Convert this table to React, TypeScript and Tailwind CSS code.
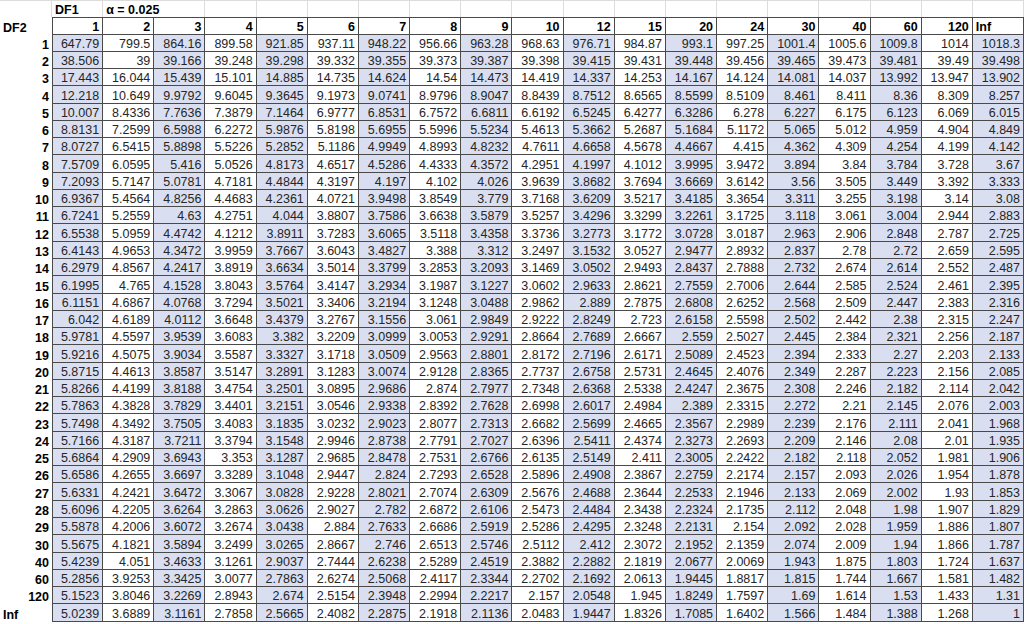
import React from "react";

const COLS = ["1", "2", "3", "4", "5", "6", "7", "8", "9", "10", "12", "15", "20", "24", "30", "40", "60", "120", "Inf"];

const ROWS: [string, string][] = [
  ["1", "647.79 799.5 864.16 899.58 921.85 937.11 948.22 956.66 963.28 968.63 976.71 984.87 993.1 997.25 1001.4 1005.6 1009.8 1014 1018.3"],
  ["2", "38.506 39 39.166 39.248 39.298 39.332 39.355 39.373 39.387 39.398 39.415 39.431 39.448 39.456 39.465 39.473 39.481 39.49 39.498"],
  ["3", "17.443 16.044 15.439 15.101 14.885 14.735 14.624 14.54 14.473 14.419 14.337 14.253 14.167 14.124 14.081 14.037 13.992 13.947 13.902"],
  ["4", "12.218 10.649 9.9792 9.6045 9.3645 9.1973 9.0741 8.9796 8.9047 8.8439 8.7512 8.6565 8.5599 8.5109 8.461 8.411 8.36 8.309 8.257"],
  ["5", "10.007 8.4336 7.7636 7.3879 7.1464 6.9777 6.8531 6.7572 6.6811 6.6192 6.5245 6.4277 6.3286 6.278 6.227 6.175 6.123 6.069 6.015"],
  ["6", "8.8131 7.2599 6.5988 6.2272 5.9876 5.8198 5.6955 5.5996 5.5234 5.4613 5.3662 5.2687 5.1684 5.1172 5.065 5.012 4.959 4.904 4.849"],
  ["7", "8.0727 6.5415 5.8898 5.5226 5.2852 5.1186 4.9949 4.8993 4.8232 4.7611 4.6658 4.5678 4.4667 4.415 4.362 4.309 4.254 4.199 4.142"],
  ["8", "7.5709 6.0595 5.416 5.0526 4.8173 4.6517 4.5286 4.4333 4.3572 4.2951 4.1997 4.1012 3.9995 3.9472 3.894 3.84 3.784 3.728 3.67"],
  ["9", "7.2093 5.7147 5.0781 4.7181 4.4844 4.3197 4.197 4.102 4.026 3.9639 3.8682 3.7694 3.6669 3.6142 3.56 3.505 3.449 3.392 3.333"],
  ["10", "6.9367 5.4564 4.8256 4.4683 4.2361 4.0721 3.9498 3.8549 3.779 3.7168 3.6209 3.5217 3.4185 3.3654 3.311 3.255 3.198 3.14 3.08"],
  ["11", "6.7241 5.2559 4.63 4.2751 4.044 3.8807 3.7586 3.6638 3.5879 3.5257 3.4296 3.3299 3.2261 3.1725 3.118 3.061 3.004 2.944 2.883"],
  ["12", "6.5538 5.0959 4.4742 4.1212 3.8911 3.7283 3.6065 3.5118 3.4358 3.3736 3.2773 3.1772 3.0728 3.0187 2.963 2.906 2.848 2.787 2.725"],
  ["13", "6.4143 4.9653 4.3472 3.9959 3.7667 3.6043 3.4827 3.388 3.312 3.2497 3.1532 3.0527 2.9477 2.8932 2.837 2.78 2.72 2.659 2.595"],
  ["14", "6.2979 4.8567 4.2417 3.8919 3.6634 3.5014 3.3799 3.2853 3.2093 3.1469 3.0502 2.9493 2.8437 2.7888 2.732 2.674 2.614 2.552 2.487"],
  ["15", "6.1995 4.765 4.1528 3.8043 3.5764 3.4147 3.2934 3.1987 3.1227 3.0602 2.9633 2.8621 2.7559 2.7006 2.644 2.585 2.524 2.461 2.395"],
  ["16", "6.1151 4.6867 4.0768 3.7294 3.5021 3.3406 3.2194 3.1248 3.0488 2.9862 2.889 2.7875 2.6808 2.6252 2.568 2.509 2.447 2.383 2.316"],
  ["17", "6.042 4.6189 4.0112 3.6648 3.4379 3.2767 3.1556 3.061 2.9849 2.9222 2.8249 2.723 2.6158 2.5598 2.502 2.442 2.38 2.315 2.247"],
  ["18", "5.9781 4.5597 3.9539 3.6083 3.382 3.2209 3.0999 3.0053 2.9291 2.8664 2.7689 2.6667 2.559 2.5027 2.445 2.384 2.321 2.256 2.187"],
  ["19", "5.9216 4.5075 3.9034 3.5587 3.3327 3.1718 3.0509 2.9563 2.8801 2.8172 2.7196 2.6171 2.5089 2.4523 2.394 2.333 2.27 2.203 2.133"],
  ["20", "5.8715 4.4613 3.8587 3.5147 3.2891 3.1283 3.0074 2.9128 2.8365 2.7737 2.6758 2.5731 2.4645 2.4076 2.349 2.287 2.223 2.156 2.085"],
  ["21", "5.8266 4.4199 3.8188 3.4754 3.2501 3.0895 2.9686 2.874 2.7977 2.7348 2.6368 2.5338 2.4247 2.3675 2.308 2.246 2.182 2.114 2.042"],
  ["22", "5.7863 4.3828 3.7829 3.4401 3.2151 3.0546 2.9338 2.8392 2.7628 2.6998 2.6017 2.4984 2.389 2.3315 2.272 2.21 2.145 2.076 2.003"],
  ["23", "5.7498 4.3492 3.7505 3.4083 3.1835 3.0232 2.9023 2.8077 2.7313 2.6682 2.5699 2.4665 2.3567 2.2989 2.239 2.176 2.111 2.041 1.968"],
  ["24", "5.7166 4.3187 3.7211 3.3794 3.1548 2.9946 2.8738 2.7791 2.7027 2.6396 2.5411 2.4374 2.3273 2.2693 2.209 2.146 2.08 2.01 1.935"],
  ["25", "5.6864 4.2909 3.6943 3.353 3.1287 2.9685 2.8478 2.7531 2.6766 2.6135 2.5149 2.411 2.3005 2.2422 2.182 2.118 2.052 1.981 1.906"],
  ["26", "5.6586 4.2655 3.6697 3.3289 3.1048 2.9447 2.824 2.7293 2.6528 2.5896 2.4908 2.3867 2.2759 2.2174 2.157 2.093 2.026 1.954 1.878"],
  ["27", "5.6331 4.2421 3.6472 3.3067 3.0828 2.9228 2.8021 2.7074 2.6309 2.5676 2.4688 2.3644 2.2533 2.1946 2.133 2.069 2.002 1.93 1.853"],
  ["28", "5.6096 4.2205 3.6264 3.2863 3.0626 2.9027 2.782 2.6872 2.6106 2.5473 2.4484 2.3438 2.2324 2.1735 2.112 2.048 1.98 1.907 1.829"],
  ["29", "5.5878 4.2006 3.6072 3.2674 3.0438 2.884 2.7633 2.6686 2.5919 2.5286 2.4295 2.3248 2.2131 2.154 2.092 2.028 1.959 1.886 1.807"],
  ["30", "5.5675 4.1821 3.5894 3.2499 3.0265 2.8667 2.746 2.6513 2.5746 2.5112 2.412 2.3072 2.1952 2.1359 2.074 2.009 1.94 1.866 1.787"],
  ["40", "5.4239 4.051 3.4633 3.1261 2.9037 2.7444 2.6238 2.5289 2.4519 2.3882 2.2882 2.1819 2.0677 2.0069 1.943 1.875 1.803 1.724 1.637"],
  ["60", "5.2856 3.9253 3.3425 3.0077 2.7863 2.6274 2.5068 2.4117 2.3344 2.2702 2.1692 2.0613 1.9445 1.8817 1.815 1.744 1.667 1.581 1.482"],
  ["120", "5.1523 3.8046 3.2269 2.8943 2.674 2.5154 2.3948 2.2994 2.2217 2.157 2.0548 1.945 1.8249 1.7597 1.69 1.614 1.53 1.433 1.31"],
  ["Inf", "5.0239 3.6889 3.1161 2.7858 2.5665 2.4082 2.2875 2.1918 2.1136 2.0483 1.9447 1.8326 1.7085 1.6402 1.566 1.484 1.388 1.268 1"],
];

const cell = "flex h-[17.27px] items-end overflow-hidden whitespace-nowrap leading-[14px]";

export default function App() {
  return (
    <div
      className="h-[624px] w-[1024px] overflow-hidden bg-white text-[12.5px] text-[#262626]"
      style={{ fontFamily: '"Liberation Sans", Arial, sans-serif' }}
    >
      <div className="grid w-[1024px] grid-cols-[52px_repeat(19,minmax(0,1fr))]">
        {/* sheet row above the table */}
        <div className={`${cell} border-t border-r border-[#dcdcdc]`} />
        <div className={`${cell} border-t border-r border-[#dcdcdc] pl-[3px] font-bold text-black`}>DF1</div>
        <div className={`${cell} col-span-2 border-t border-r border-[#dcdcdc] pl-[3px] font-bold text-black`}>α = 0.025</div>
        {COLS.slice(3).map((c) => (
          <div key={"top" + c} className={`${cell} border-t border-r border-[#dcdcdc]`} />
        ))}

        {/* DF1 header */}
        <div className={`${cell} pl-[3px] font-bold text-black`}>DF2</div>
        {COLS.map((c, i) => (
          <div
            key={"h" + c}
            className={`${cell} border-y border-r border-[#4a4a4a] font-bold text-black ${i === 0 ? "border-l" : ""} ${
              c === "Inf" ? "justify-start pl-[3px]" : "justify-end pr-[3px]"
            }`}
          >
            {c}
          </div>
        ))}

        {ROWS.map(([label, line]) => (
          <React.Fragment key={label}>
            <div
              className={`${cell} font-bold text-black ${
                label === "Inf" ? "justify-start pl-[3px]" : "justify-end pr-[3px]"
              }`}
            >
              {label}
            </div>
            {line.split(" ").map((v, i) => (
              <div
                key={label + "-" + i}
                className={`${cell} justify-end border-r border-b border-[#4a4a4a] pr-[3px] ${
                  i === 0 ? "border-l" : ""
                } ${i % 2 === 0 ? "bg-[#d9dff1]" : "bg-white"}`}
              >
                {v}
              </div>
            ))}
          </React.Fragment>
        ))}
      </div>
    </div>
  );
}
